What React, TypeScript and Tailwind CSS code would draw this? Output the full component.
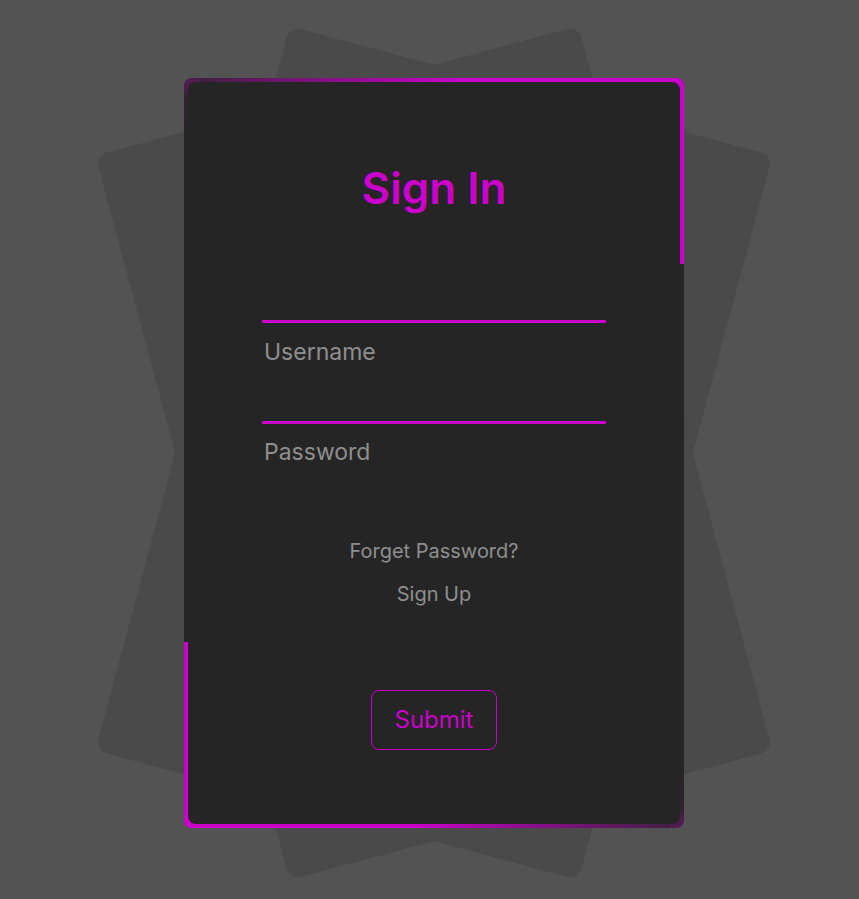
import React from "react";

export default function App() {
  return (
    <div
      className="w-full h-[899px] overflow-hidden bg-[#545354] pl-[184px] pt-[78px]"
      style={{ fontFamily: "Inter, 'Noto Sans', sans-serif" }}
    >
      <div className="relative w-[500px] h-[750px]">
        <div className="absolute inset-0 rounded-[12px] bg-[#4a4a4a] rotate-[15deg]" />
        <div className="absolute inset-0 rounded-[12px] bg-[#4a4a4a] -rotate-[15deg]" />
        <div className="relative w-[500px] h-[750px] rounded-[8px] overflow-hidden bg-[#252525]">
          <div className="absolute top-0 left-0 right-0 h-[14px] bg-[linear-gradient(90deg,rgba(204,0,204,0.13),#c0c_55%)]" />
          <div className="absolute top-0 right-0 w-[14px] h-[186px] bg-[#c0c]" />
          <div className="absolute top-0 left-0 w-[14px] h-[60px] bg-[linear-gradient(180deg,rgba(204,0,204,0.13),rgba(204,0,204,0))]" />
          <div className="absolute bottom-0 left-0 right-0 h-[14px] bg-[linear-gradient(90deg,#c0c_45%,rgba(204,0,204,0.13))]" />
          <div className="absolute bottom-0 left-0 w-[14px] h-[186px] bg-[#c0c]" />
          <div className="absolute bottom-0 right-0 w-[14px] h-[60px] bg-[linear-gradient(0deg,rgba(204,0,204,0.13),rgba(204,0,204,0))]" />

          <form
            className="relative m-[4px] h-[742px] rounded-[8px] bg-[#252525] flex flex-col items-center pt-[81px]"
            onSubmit={(e) => e.preventDefault()}
          >
            <h2 className="h-[50px] leading-[50px] text-[44px] font-semibold text-[#c0c]">Sign In</h2>

            <div className="w-[344px] mt-[70px] flex flex-col">
              <input
                type="text"
                className="h-[40px] w-full bg-transparent border-b-[3px] border-[#c0c] outline-none text-white px-[2px]"
              />
              <span className="mt-[15px] h-[28px] leading-[28px] text-[23px] text-[#8f8f8f] pl-[2px]">Username</span>
            </div>

            <div className="w-[344px] mt-[18px] flex flex-col">
              <input
                type="password"
                className="h-[40px] w-full bg-transparent border-b-[3px] border-[#c0c] outline-none text-white px-[2px]"
              />
              <span className="mt-[14px] h-[28px] leading-[28px] text-[23px] text-[#8f8f8f] pl-[2px]">Password</span>
            </div>

            <a className="mt-[73px] h-[24px] leading-[24px] text-[20px] text-[#8f8f8f]">Forget Password?</a>
            <a className="mt-[19px] h-[24px] leading-[24px] text-[20px] text-[#8f8f8f]">Sign Up</a>

            <button
              type="submit"
              className="mt-[84px] w-[126px] h-[60px] rounded-[8px] border border-[#c0c] text-[#c0c] text-[24px] bg-transparent"
            >
              Submit
            </button>
          </form>
        </div>
      </div>
    </div>
  );
}
